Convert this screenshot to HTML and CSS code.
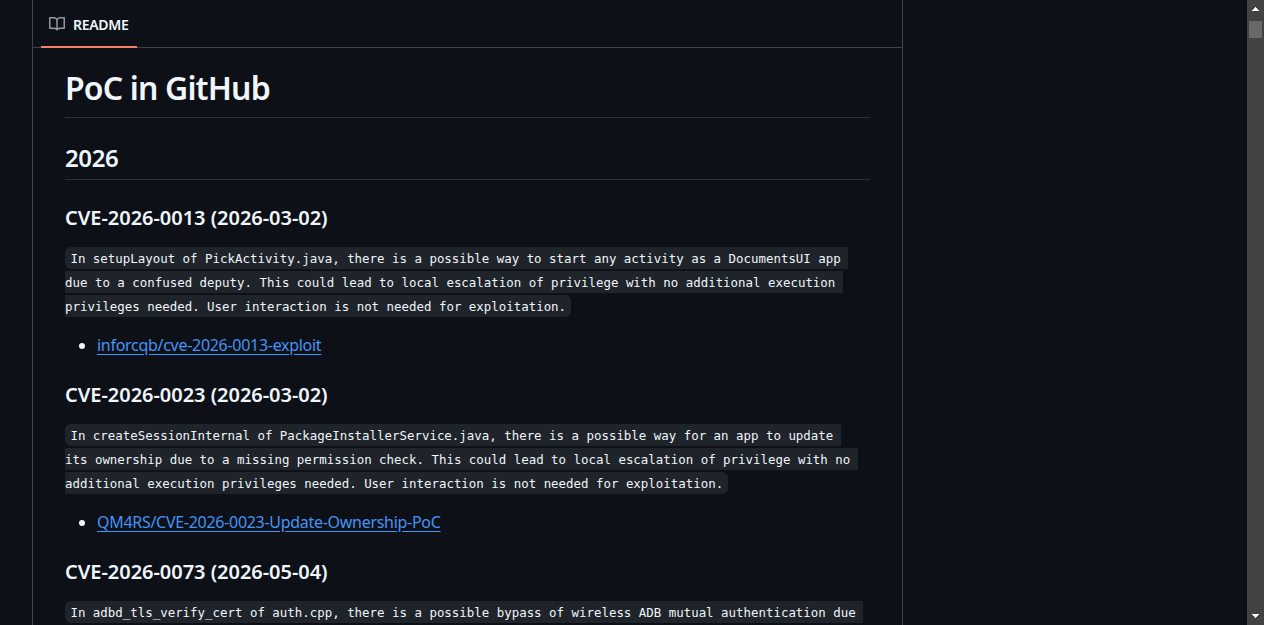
FILE: index.html
```
<!DOCTYPE html>
<html lang="en">
<head>
  <meta charset="UTF-8">
  <meta name="viewport" content="width=device-width, initial-scale=1.0">
  <title>PoC in GitHub</title>
  <link rel="stylesheet" href="styles.css">
</head>
<body>
  <div class="page">
    <main class="readme">
      <nav class="tabs">
        <a class="tab" href="#readme">
          <svg class="tab-icon" viewBox="0 0 16 16" width="16" height="16" aria-hidden="true">
            <path d="M0 1.75A.75.75 0 0 1 .75 1h4.253c1.227 0 2.317.59 3 1.501A3.743 3.743 0 0 1 11.006 1h4.245a.75.75 0 0 1 .75.75v10.5a.75.75 0 0 1-.75.75h-4.507a2.25 2.25 0 0 0-1.591.659l-.622.621a.75.75 0 0 1-1.06 0l-.622-.621A2.25 2.25 0 0 0 5.258 13H.75a.75.75 0 0 1-.75-.75Zm7.251 10.324.004-5.073-.002-2.253A2.25 2.25 0 0 0 5.003 2.5H1.5v9h3.757a3.75 3.75 0 0 1 1.994.574ZM8.755 4.75l-.004 7.322a3.752 3.752 0 0 1 1.992-.572H14.5v-9h-3.495a2.25 2.25 0 0 0-2.25 2.25Z"/>
          </svg>
          <span class="tab-label">README</span>
        </a>
      </nav>

      <article class="markdown" id="readme">
        <h1>PoC in GitHub</h1>
        <h2>2026</h2>

        <h3>CVE-2026-0013 (2026-03-02)</h3>
        <p><code>In setupLayout of PickActivity.java, there is a possible way to start any activity as a DocumentsUI app <br>due to a confused deputy. This could lead to local escalation of privilege with no additional execution <br>privileges needed. User interaction is not needed for exploitation.</code></p>
        <ul>
          <li><a href="#">inforcqb/cve-2026-0013-exploit</a></li>
        </ul>

        <h3>CVE-2026-0023 (2026-03-02)</h3>
        <p><code>In createSessionInternal of PackageInstallerService.java, there is a possible way for an app to update <br>its ownership due to a missing permission check. This could lead to local escalation of privilege with no <br>additional execution privileges needed. User interaction is not needed for exploitation.</code></p>
        <ul>
          <li><a href="#">QM4RS/CVE-2026-0023-Update-Ownership-PoC</a></li>
        </ul>

        <h3>CVE-2026-0073 (2026-05-04)</h3>
        <p><code class="open">In adbd_tls_verify_cert of auth.cpp, there is a possible bypass of wireless ADB mutual authentication due </code></p>
      </article>
    </main>
  </div>

  <div class="scrollbar">
    <svg class="arrow" viewBox="0 0 17 17" width="17" height="17" shape-rendering="crispEdges"><path d="M8 7h1v1h1v1h1v1h1v1H5v-1h1V9h1V8h1z"/></svg>
    <div class="thumb"></div>
    <svg class="arrow arrow-down" viewBox="0 0 17 17" width="17" height="17" shape-rendering="crispEdges"><path d="M5 6h7v1h-1v1h-1v1H9v1H8V9H7V8H6V7H5z"/></svg>
  </div>
</body>
</html>
```

FILE: styles.css
```
* {
  box-sizing: border-box;
}

body {
  margin: 0;
  height: 100vh;
  display: flex;
  overflow: hidden;
  background-color: #0d1117;
  color: #f0f6fc;
  font-family: "Noto Sans", "Open Sans", sans-serif;
  font-size: 16px;
  line-height: 24px;
}

.page {
  flex: 1;
  height: 100vh;
  padding-left: 32px;
  overflow: hidden;
}

.readme {
  width: 871px;
  min-height: 100%;
  border-left: 1px solid #3d444d;
  border-right: 1px solid #3d444d;
}

.tabs {
  height: 48px;
  padding-left: 8px;
  display: flex;
  border-bottom: 1px solid #3d444d;
}

.tab {
  width: 96px;
  height: 48px;
  padding: 0 8px;
  display: flex;
  align-items: center;
  gap: 8px;
  border-bottom: 2px solid #f78166;
  color: #f0f6fc;
  font-size: 14px;
  font-weight: 600;
  text-decoration: none;
}

.tab-icon {
  margin-top: 2px;
  fill: #9198a1;
}

.tab-label {
  padding-top: 3px;
  letter-spacing: -0.3px;
}

.markdown {
  padding: 19.4px 32px 32px;
}

h1,
h2,
h3 {
  margin: 24px 0 16px;
  font-weight: 600;
  line-height: 1.25;
}

h1 {
  margin-top: 0;
  padding-top: 1px;
  padding-bottom: 8.6px;
  border-bottom: 1px solid #2b3139;
  font-size: 32px;
  letter-spacing: -0.85px;
}

h2 {
  padding-top: 1px;
  padding-bottom: 6.2px;
  border-bottom: 1px solid #2b3139;
  font-size: 24px;
  letter-spacing: -0.4px;
}

h3 {
  margin-top: 25px;
  margin-bottom: 14px;
  font-size: 20px;
  letter-spacing: -0.03px;
}

p {
  margin: 0 0 17px;
}

ul {
  margin: 0 0 16px;
  padding-left: 32px;
}

code {
  padding: 3.5px 5px 3.5px 5.44px;
  border-radius: 6px;
  background-color: #1f242a;
  font-family: "DejaVu Sans Mono", monospace;
  font-size: 12.43px;
  line-height: 16px;
  white-space: break-spaces;
}

code.open {
  padding-right: 0;
  border-radius: 6px 0 0 6px;
}

.markdown a {
  color: #4493f8;
  letter-spacing: -0.29px;
  text-decoration: underline;
  text-underline-offset: 3px;
}

.scrollbar {
  width: 17px;
  display: flex;
  flex-direction: column;
  align-items: center;
  background-color: #424242;
}

.arrow {
  display: block;
  fill: #fff;
}

.arrow-down {
  margin-top: auto;
}

.thumb {
  width: 13px;
  height: 17px;
  margin-top: 4px;
  background-color: #686868;
}
```
